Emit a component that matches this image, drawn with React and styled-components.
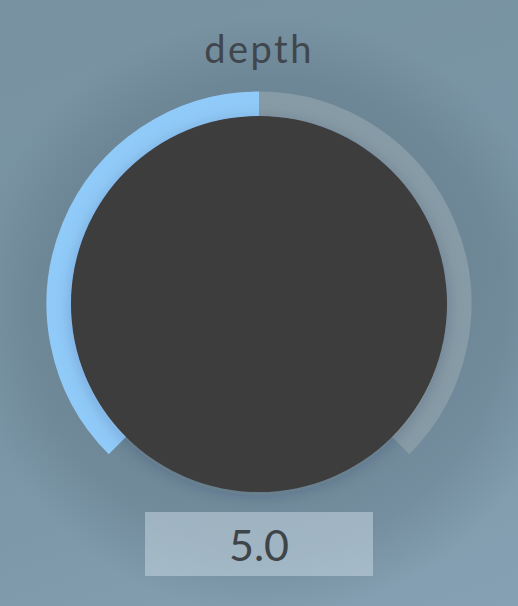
import React from "react"
import styled, { createGlobalStyle } from "styled-components"

const GlobalStyle = createGlobalStyle`
    html, body {
        margin: 0;
        padding: 0;
    }
    body {
        font-family: Lato, "Noto Sans", sans-serif;
        background: #7893a3;
    }
`

const Panel = styled.div`
    width: 518px;
    height: 606px;
    display: flex;
    flex-direction: column;
    align-items: center;
    background:
        radial-gradient(circle at 52% 52%, rgba(40, 60, 75, 0.28) 0, rgba(40, 60, 75, 0.14) 235px, rgba(40, 60, 75, 0) 300px),
        linear-gradient(160deg, #7892a2 0%, #7a95a5 55%, #86a1b3 100%);
    overflow: hidden;
`

const Label = styled.div`
    margin-top: 22px;
    height: 52px;
    font-size: 38px;
    letter-spacing: 2.5px;
    color: #40464b;
    line-height: 52px;
`

const KnobSvg = styled.svg`
    display: block;
    margin-top: 17px;
    overflow: visible;
`

const ValueBox = styled.div`
    margin-top: 21px;
    width: 228px;
    height: 64px;
    display: flex;
    align-items: center;
    justify-content: center;
    background: rgba(196, 214, 224, 0.55);
    font-size: 43px;
    color: #3f4448;
`

const R = 200
const STROKE = 25

function polar(deg, r) {
    const a = (deg - 90) * Math.PI / 180
    return [r * Math.cos(a), r * Math.sin(a)]
}

function arcPath(from, to, r) {
    const [x1, y1] = polar(from, r)
    const [x2, y2] = polar(to, r)
    const large = to - from > 180 ? 1 : 0
    return `M ${x1} ${y1} A ${r} ${r} 0 ${large} 1 ${x2} ${y2}`
}

function Knob({ value, min, max }) {
    const start = -135
    const end = 135
    const angle = start + (end - start) * (value - min) / (max - min)

    return (
        <KnobSvg width="426" height="400" viewBox="-213 -213 426 400">
            <defs>
                <filter id="knobShadow" x="-30%" y="-30%" width="160%" height="160%">
                    <feDropShadow dx="0" dy="3" stdDeviation="8" floodColor="#1e2a33" floodOpacity="0.2" />
                </filter>
            </defs>
            <path d={arcPath(angle, end, R)} fill="none" stroke="#869ba6" strokeWidth={STROKE} />
            <path d={arcPath(start, angle, R)} fill="none" stroke="#90caf9" strokeWidth={STROKE} />
            <circle cx="0" cy="0" r="188" fill="#3d3d3d" filter="url(#knobShadow)" />
        </KnobSvg>
    )
}

export default function App() {
    const value = 5.0

    return (
        <>
            <GlobalStyle />
            <Panel>
                <Label>depth</Label>
                <Knob value={value} min={0} max={10} />
                <ValueBox>{value.toFixed(1)}</ValueBox>
            </Panel>
        </>
    )
}
